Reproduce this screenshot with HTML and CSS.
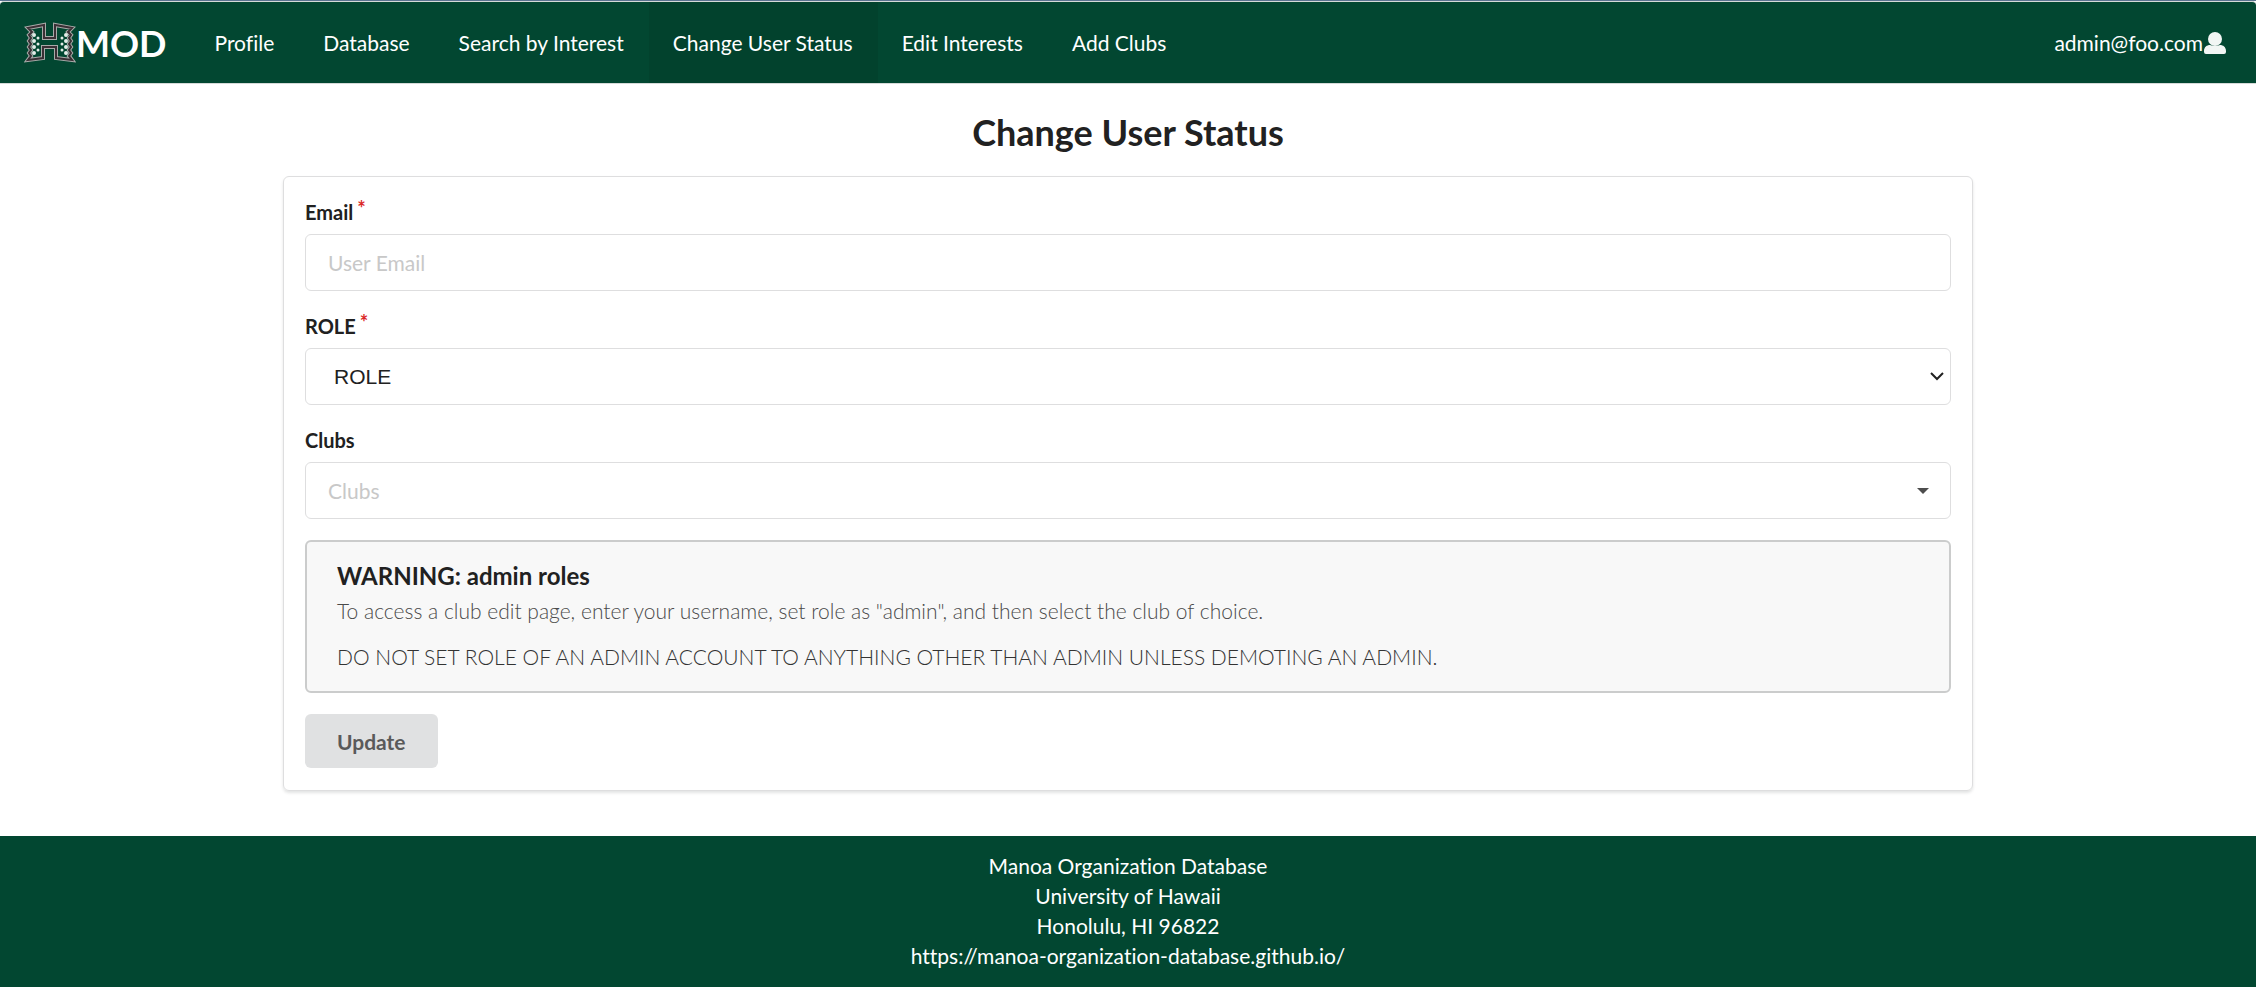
FILE: index.html
```html
<!DOCTYPE html>
<html lang="en">
<head>
<meta charset="utf-8">
<title>MOD - Change User Status</title>
<link rel="stylesheet" href="styles.css">
</head>
<body>
<nav class="navbar">
  <a class="brand" href="#">
    <svg class="logo" viewBox="0 0 52 42" aria-hidden="true">
      <path class="logo-halo" d="M4 6 20 3V16H31V3L48 6 44 10 47 13 45 16 47 19 45 22 47 25 45 28 47 31 45 34 48 38 32 36V25H19V36L4 38 7 34 5 31 7 28 5 25 7 22 5 19 7 16 5 13 8 10Z"/>
      <path class="logo-line" d="M4 6 20 3V16H31V3L48 6 44 10 47 13 45 16 47 19 45 22 47 25 45 28 47 31 45 34 48 38 32 36V25H19V36L4 38 7 34 5 31 7 28 5 25 7 22 5 19 7 16 5 13 8 10Z"/>
      <path class="logo-dots" d="M10 13v19M42 13v19"/>
      <path class="logo-dots logo-dots-small" d="M14 16v14M38 16v14"/>
    </svg>
    <span class="brand-name">MOD</span>
  </a>
  <a class="nav-item" href="#">Profile</a>
  <a class="nav-item" href="#">Database</a>
  <a class="nav-item" href="#">Search by Interest</a>
  <a class="nav-item active" href="#">Change User Status</a>
  <a class="nav-item" href="#">Edit Interests</a>
  <a class="nav-item" href="#">Add Clubs</a>
  <button class="nav-item account" type="button">admin@foo.com<svg class="user-icon" viewBox="0 0 24 24" aria-hidden="true"><circle cx="12" cy="8" r="7"/><path d="M1 20c0-4 3-6 6-6 1 0 2 1 5 1s4-1 5-1c3 0 6 2 6 6v1q0 2-2 2H3q-2 0-2-2z"/></svg></button>
</nav>
<main class="page">
  <h2 class="title">Change User Status</h2>
  <form class="card">
    <div class="field">
      <label class="label required" for="email">Email</label>
      <input class="control" id="email" type="text" placeholder="User Email">
    </div>
    <div class="field">
      <label class="label required" for="role">ROLE</label>
      <div class="select-wrap">
        <select class="control role-select" id="role"><option>ROLE</option><option>user</option><option>admin</option></select>
        <svg class="chevron" viewBox="0 0 14 9" aria-hidden="true"><path d="M1 1 7 7 13 1"/></svg>
      </div>
    </div>
    <div class="field">
      <label class="label" for="clubs">Clubs</label>
      <div class="select-wrap">
        <select class="control clubs-select" id="clubs"><option>Clubs</option></select>
        <svg class="caret" viewBox="0 0 12 6" aria-hidden="true"><path d="M0 0H12L6 6Z"/></svg>
      </div>
    </div>
    <section class="message">
      <h3 class="message-title">WARNING: admin roles</h3>
      <p class="message-text">To access a club edit page, enter your username, set role as "admin", and then select the club of choice.</p>
      <p class="message-text strong">DO NOT SET ROLE OF AN ADMIN ACCOUNT TO ANYTHING OTHER THAN ADMIN UNLESS DEMOTING AN ADMIN.</p>
    </section>
    <button class="update" type="button">Update</button>
  </form>
</main>
<footer class="footer">
  <div>Manoa Organization Database</div>
  <div>University of Hawaii</div>
  <div>Honolulu, HI 96822</div>
  <div>https://manoa-organization-database.github.io/</div>
</footer>
</body>
</html>
```
FILE: styles.css
```css
* { box-sizing: border-box; }

body {
  margin: 0;
  min-height: 100vh;
  display: flex;
  flex-direction: column;
  border-top: 1px solid #5b7390;
  background: #fff;
  color: #212121;
  font: 21px/30px Lato, "Liberation Sans", sans-serif;
  font-variant-ligatures: none;
}

.navbar {
  display: flex;
  align-items: stretch;
  min-height: 83px;
  border: solid #d5dad8;
  border-width: 1px 0;
  border-radius: 4px 4px 0 0;
  background: #024731;
}

.brand,
.nav-item {
  display: flex;
  align-items: center;
  padding: 0 24px;
  color: #fff;
  text-decoration: none;
}

.nav-item { padding-right: 25px; }
.logo { width: 52px; height: 42px; }
.logo path { fill: none; }
.logo .logo-halo { stroke: #a9aaa9; stroke-width: 4; }
.logo .logo-line { stroke: #3a3035; stroke-width: 2; }
.logo .logo-dots { stroke: #e4ebe8; stroke-width: 4; stroke-linecap: round; stroke-dasharray: 0 6; }
.logo .logo-dots-small { stroke-width: 3; }
.brand-name { font-size: 36px; font-weight: 700; }

.nav-item.active { background: #02422d; }

.account {
  margin-left: auto;
  padding-right: 29px;
  border: 0;
  background: none;
  font: inherit;
  font-variant-ligatures: none;
}

.user-icon { width: 24px; height: 24px; fill: #f2f6f4; }

.page {
  width: 75%;
  max-width: 1690px;
  margin: 0 auto;
  padding: 25px 0 45px;
}

.title {
  margin: 0 0 21px;
  font-size: 36px;
  line-height: 46px;
  text-align: center;
}

.card {
  padding: 21px 21px 22px;
  border: 1px solid #dededf;
  border-radius: 6px;
  box-shadow: 0 2px 3px #22242620;
}

.field { margin-bottom: 21px; }

.label {
  display: block;
  margin-bottom: 8px;
  font-size: 20px;
  line-height: 28px;
  font-weight: 700;
}

.required::after {
  content: "*";
  margin-left: 4px;
  color: #db2828;
  vertical-align: 4px;
  line-height: 0;
}

.control {
  display: block;
  width: 100%;
  height: 57px;
  padding: 0 22px;
  border: 1px solid #dededf;
  border-radius: 6px;
  background: #fff;
  color: #212121;
  font: inherit;
  appearance: none;
}

.control::placeholder { color: #c8c8c8; opacity: 1; }
.select-wrap { position: relative; }
.role-select { padding: 0 28px; font-family: "Liberation Sans", Arial, sans-serif; }
.clubs-select { color: #c8c8c8; }

.chevron,
.caret {
  position: absolute;
  top: 24px;
  pointer-events: none;
}

.chevron { right: 7px; width: 14px; height: 9px; fill: none; stroke: #212121; stroke-width: 2; }
.caret { right: 22px; top: 26px; width: 12px; height: 6px; fill: #4d4d4d; }

.message {
  margin-bottom: 21px;
  padding: 19px 30px;
  border: 2px solid #cbcccc;
  border-radius: 6px;
  background: #f8f8f8;
}

.message-title { margin: 0 0 6px; font-size: 24px; line-height: 29px; }
.message-text { margin: 0; color: #4a4a4a; font-weight: 300; }
.message-text.strong { margin-top: 16px; color: #333; }

.update {
  display: block;
  height: 54px;
  padding: 2px 32px 0;
  border: 0;
  border-radius: 6px;
  background: #e0e1e2;
  color: #5a5a5a;
  font: inherit;
  font-weight: 700;
}

.footer {
  flex: 1;
  padding: 15px 0;
  background: #024731;
  color: #fff;
  text-align: center;
}
```
